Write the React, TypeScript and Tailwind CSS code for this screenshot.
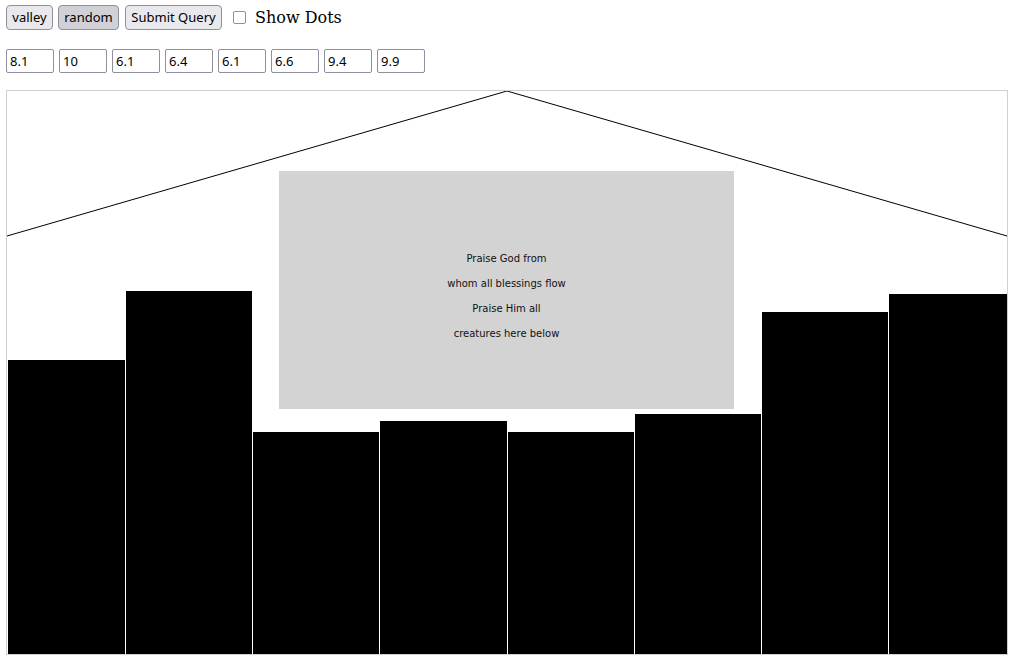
import { useState } from "react";

const values = [8.1, 10, 6.1, 6.4, 6.1, 6.6, 9.4, 9.9];
const widths = [117, 126, 126, 127, 126, 126, 126, 118];

const lines = [
  "Praise God from",
  "whom all blessings flow",
  "Praise Him all",
  "creatures here below",
];

const App = () => {
  const [dots, setDots] = useState(false);

  return (
    <div className="px-[6px] pt-[5px] font-['Noto_Sans',sans-serif] text-black">
      {/* controls */}
      <div className="flex items-center h-[25px]">
        <button className="w-[47px] h-[25px] text-[13px] bg-[#e9e9ed] border border-[#8f8f9d] rounded-[4px]">
          valley
        </button>
        <button className="ml-[5px] w-[61px] h-[25px] text-[13px] bg-[#d0d0d7] border border-[#8f8f9d] rounded-[4px]">
          random
        </button>
        <button className="ml-[6px] w-[97px] h-[25px] text-[13px] bg-[#e9e9ed] border border-[#8f8f9d] rounded-[4px]">
          Submit Query
        </button>
        <label className="ml-[11px] flex items-center gap-[9px] font-['DejaVu_Serif',serif] text-[16px]">
          <input
            type="checkbox"
            checked={dots}
            onChange={() => setDots(!dots)}
            className="appearance-none w-[13px] h-[13px] border border-[#8f8f9d] rounded-[2px] bg-white"
          />
          Show Dots
        </label>
      </div>

      {/* values */}
      <div className="flex gap-[5px] mt-[19px]">
        {values.map((v, i) => (
          <input
            key={i}
            defaultValue={v}
            className="w-[48px] h-[24px] px-[3px] text-[13px] border border-[#8f8f9d] rounded-[2px]"
          />
        ))}
      </div>

      {/* chart */}
      <div className="relative mt-[17px] w-[1002px] h-[565px] border border-[#d0d0d0]">
        <div className="flex items-end h-full pl-px gap-px">
          {values.map((v, i) => (
            <div
              key={i}
              className="bg-black shrink-0"
              style={{ width: widths[i], height: Math.round(v * 36.34) }}
            />
          ))}
        </div>

        <svg className="absolute inset-0" width="1000" height="563" viewBox="0 0 1000 563">
          <polyline points="0,145 500,0 1000,145" fill="none" stroke="black" strokeWidth="1" />
        </svg>

        <div className="absolute left-[272px] top-[80px] w-[455px] h-[238px] bg-[#d3d3d3] flex flex-col items-center justify-center pt-[11px] font-['DejaVu_Sans',sans-serif] text-[10px] text-[#111]">
          {lines.map((l) => (
            <div key={l} className="h-[25px] leading-[25px]">
              {l}
            </div>
          ))}
        </div>
      </div>
    </div>
  );
};

export default App;
